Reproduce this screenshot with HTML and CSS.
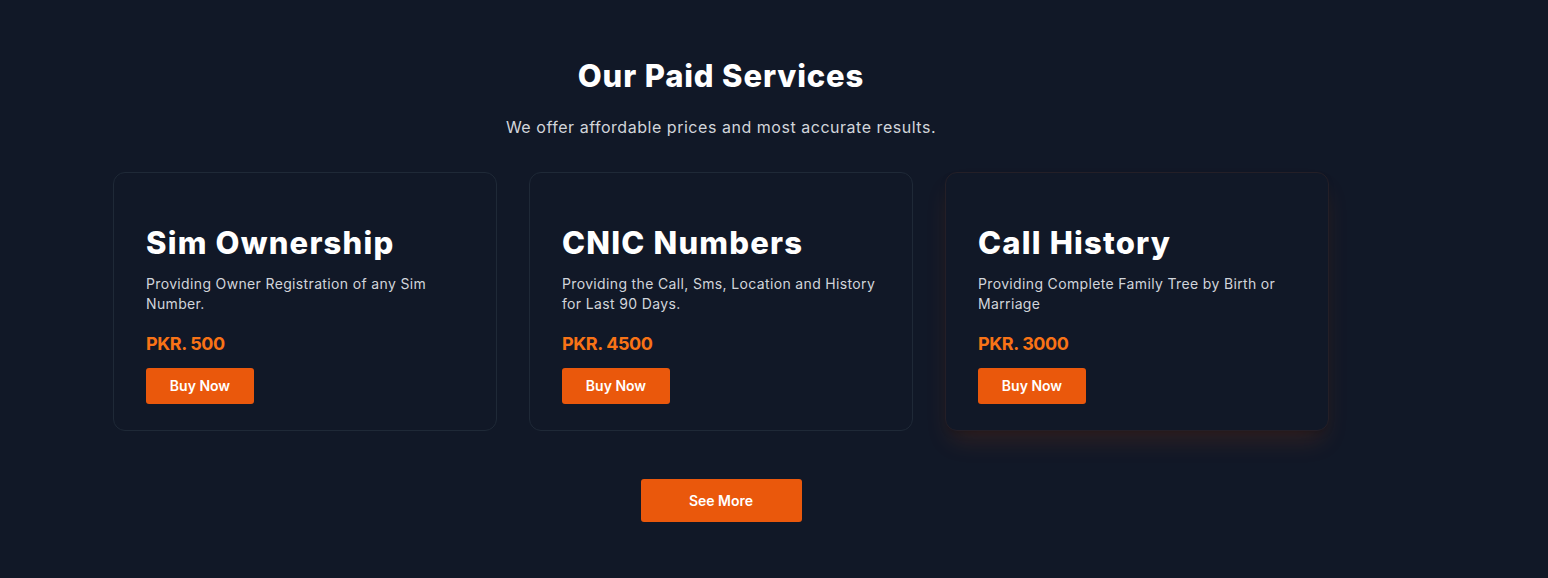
FILE: index.html
```html
<!DOCTYPE html>
<html lang="en">
<head>
<meta charset="utf-8">
<title>Our Paid Services</title>
<link rel="stylesheet" href="styles.css">
</head>
<body>
<section class="services">
  <header class="services-head">
    <h2 class="services-title">Our Paid Services</h2>
    <p class="services-sub">We offer affordable prices and most accurate results.</p>
  </header>
  <div class="cards">
    <article class="card">
      <h3 class="card-title">Sim Ownership</h3>
      <p class="card-desc">Providing Owner Registration of any Sim Number.</p>
      <p class="card-price">PKR. 500</p>
      <a class="btn-buy" href="#">Buy Now</a>
    </article>
    <article class="card">
      <h3 class="card-title">CNIC Numbers</h3>
      <p class="card-desc">Providing the Call, Sms, Location and History for Last 90 Days.</p>
      <p class="card-price">PKR. 4500</p>
      <a class="btn-buy" href="#">Buy Now</a>
    </article>
    <article class="card card-hover">
      <h3 class="card-title">Call History</h3>
      <p class="card-desc">Providing Complete Family Tree by Birth or Marriage</p>
      <p class="card-price">PKR. 3000</p>
      <a class="btn-buy" href="#">Buy Now</a>
    </article>
  </div>
  <div class="more">
    <a class="btn-more" href="#">See More</a>
  </div>
</section>
</body>
</html>
```

FILE: styles.css
```css
* { box-sizing: border-box; }
html, body {
  margin: 0;
  background: #111827;
  height: 100%;
}
body {
  font-family: "Inter", "DejaVu Sans", sans-serif;
  color: #fff;
}
.services {
  width: 1442px;
  padding-top: 56px;
}
.services-head {
  text-align: center;
}
.services-title {
  margin: 0;
  font-size: 31px;
  line-height: 40px;
  font-weight: 800;
  letter-spacing: 0.85px;
}
.services-sub {
  margin: 19px 0 0;
  font-size: 16px;
  line-height: 24px;
  color: #d1d5db;
  letter-spacing: 0.53px;
}
.cards {
  width: 1216px;
  margin: 33px auto 0;
  display: grid;
  grid-template-columns: repeat(3, 1fr);
  gap: 32px;
}
.card {
  border: 1px solid #1f2937;
  border-radius: 12px;
  background: #111827;
  padding: 50px 32px 25px;
  height: 259px;
}
.card-hover {
  box-shadow: 0 14px 26px -6px rgba(234, 88, 12, 0.16), 0 4px 8px -4px rgba(0, 0, 0, 0.4);
  border-color: #241f27;
}
.card-title {
  margin: 0;
  font-size: 31px;
  line-height: 40px;
  font-weight: 800;
  letter-spacing: 1.2px;
}
.card-desc {
  margin: 11px 0 0;
  font-size: 14px;
  line-height: 20px;
  color: #d1d5db;
  letter-spacing: 0.35px;
}
.card-price {
  margin: 18px 0 0;
  font-size: 18px;
  line-height: 24px;
  font-weight: 700;
  color: #f97316;
  letter-spacing: -0.4px;
}
.btn-buy {
  display: inline-block;
  margin-top: 12px;
  width: 108px;
  height: 36px;
  line-height: 36px;
  text-align: center;
  background: #ea580c;
  color: #fff;
  border-radius: 3px;
  font-size: 14px;
  font-weight: 600;
  text-decoration: none;
}
.more {
  display: flex;
  justify-content: center;
  margin-top: 48px;
}
.btn-more {
  display: block;
  width: 161px;
  height: 43px;
  line-height: 43px;
  text-align: center;
  background: #ea580c;
  color: #fff;
  border-radius: 3px;
  font-size: 14px;
  font-weight: 600;
  text-decoration: none;
}
```
